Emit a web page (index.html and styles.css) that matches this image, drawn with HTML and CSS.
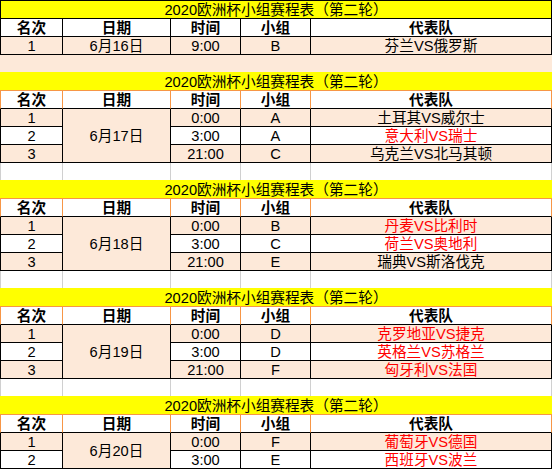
FILE: index.html
```html
<!DOCTYPE html>
<html lang="zh-CN">
<head>
<meta charset="utf-8">
<title>2020欧洲杯小组赛程表（第二轮）</title>
<link rel="stylesheet" href="styles.css">
</head>
<body>
<main class="sheet">
  <section class="block">
    <div class="title title-top">2020欧洲杯小组赛程表（第二轮）</div>
    <div class="hd first">名次</div><div class="hd">日期</div><div class="hd">时间</div><div class="hd">小组</div><div class="hd">代表队</div>
    <div class="cell first pk">1</div><div class="cell date">6月16日</div><div class="cell pk">9:00</div><div class="cell pk">B</div><div class="cell pk">芬兰VS俄罗斯</div>
  </section>
  <div class="gap-peach"></div>

  <section class="block">
    <div class="title">2020欧洲杯小组赛程表（第二轮）</div>
    <div class="hd hd-o first">名次</div><div class="hd hd-o">日期</div><div class="hd hd-o">时间</div><div class="hd hd-o">小组</div><div class="hd hd-o">代表队</div>
    <div class="cell first pk">1</div><div class="cell date span3">6月17日</div><div class="cell pk">0:00</div><div class="cell pk">A</div><div class="cell pk">土耳其VS威尔士</div>
    <div class="cell first">2</div><div class="cell">3:00</div><div class="cell">A</div><div class="cell red">意大利VS瑞士</div>
    <div class="cell first pk">3</div><div class="cell pk">21:00</div><div class="cell pk">C</div><div class="cell pk">乌克兰VS北马其顿</div>
  </section>
  <div class="gap-grid"><span></span><span></span><span></span><span></span><span></span></div>

  <section class="block">
    <div class="title">2020欧洲杯小组赛程表（第二轮）</div>
    <div class="hd hd-o first">名次</div><div class="hd hd-o">日期</div><div class="hd hd-o">时间</div><div class="hd hd-o">小组</div><div class="hd hd-o">代表队</div>
    <div class="cell first pk">1</div><div class="cell date span3">6月18日</div><div class="cell pk">0:00</div><div class="cell pk">B</div><div class="cell pk red">丹麦VS比利时</div>
    <div class="cell first">2</div><div class="cell">3:00</div><div class="cell">C</div><div class="cell red">荷兰VS奥地利</div>
    <div class="cell first pk">3</div><div class="cell pk">21:00</div><div class="cell pk">E</div><div class="cell pk">瑞典VS斯洛伐克</div>
  </section>
  <div class="gap-grid"><span></span><span></span><span></span><span></span><span></span></div>

  <section class="block">
    <div class="title">2020欧洲杯小组赛程表（第二轮）</div>
    <div class="hd hd-o first">名次</div><div class="hd hd-o">日期</div><div class="hd hd-o">时间</div><div class="hd hd-o">小组</div><div class="hd hd-o">代表队</div>
    <div class="cell first pk">1</div><div class="cell date span3">6月19日</div><div class="cell pk">0:00</div><div class="cell pk">D</div><div class="cell pk red">克罗地亚VS捷克</div>
    <div class="cell first">2</div><div class="cell">3:00</div><div class="cell">D</div><div class="cell red">英格兰VS苏格兰</div>
    <div class="cell first pk">3</div><div class="cell pk">21:00</div><div class="cell pk">F</div><div class="cell pk red">匈牙利VS法国</div>
  </section>
  <div class="gap-grid"><span></span><span></span><span></span><span></span><span></span></div>

  <section class="block">
    <div class="title">2020欧洲杯小组赛程表（第二轮）</div>
    <div class="hd hd-o first">名次</div><div class="hd hd-o">日期</div><div class="hd hd-o">时间</div><div class="hd hd-o">小组</div><div class="hd hd-o">代表队</div>
    <div class="cell first pk">1</div><div class="cell date span2">6月20日</div><div class="cell pk">0:00</div><div class="cell pk">F</div><div class="cell pk red">葡萄牙VS德国</div>
    <div class="cell first">2</div><div class="cell">3:00</div><div class="cell">E</div><div class="cell red">西班牙VS波兰</div>
  </section>
</main>
</body>
</html>
```

FILE: styles.css
```css
html, body {
  margin: 0;
  padding: 0;
  background: #ffffff;
}

body {
  font-family: "Liberation Sans", "Noto Sans CJK SC", sans-serif;
  font-size: 14.67px;
  color: #000000;
}

.sheet {
  width: 552px;
}

.block,
.gap-grid {
  display: grid;
  grid-template-columns: 63px 108px 70px 70px 241px;
}

.title {
  grid-column: 1 / -1;
  box-sizing: border-box;
  height: 18px;
  padding-top: 2px;
  line-height: 16px;
  background: #ffff00;
  text-align: center;
  white-space: nowrap;
}

.title-top {
  height: 19px;
  padding-top: 1px;
  border: 1px solid #000000;
}

.hd,
.cell {
  box-sizing: border-box;
  height: 18px;
  padding-top: 1px;
  line-height: 16px;
  border-right: 1px solid #000000;
  border-bottom: 1px solid #000000;
  text-align: center;
  white-space: nowrap;
}

.hd {
  font-weight: 700;
  background: #ffffff;
}

.first {
  border-left: 1px solid #000000;
}

.hd-o {
  height: 19px;
  border-top: 1px solid #f79646;
  border-right-color: #f79646;
}

.hd-o.first {
  border-left-color: #f79646;
}

.pk {
  background: #fde9d9;
}

.date {
  height: auto;
  padding-top: 0;
  display: flex;
  align-items: center;
  justify-content: center;
  background: #fde9d9;
}

.span3 {
  grid-row: span 3;
}

.span2 {
  grid-row: span 2;
}

.red {
  color: #ff0000;
}

.gap-peach {
  height: 17px;
  background: #fde9d9;
}

.gap-grid {
  height: 17px;
}

.gap-grid span {
  border-right: 1px solid #d0d0d0;
}

.gap-grid span:first-child {
  border-left: 1px solid #d0d0d0;
}
```
